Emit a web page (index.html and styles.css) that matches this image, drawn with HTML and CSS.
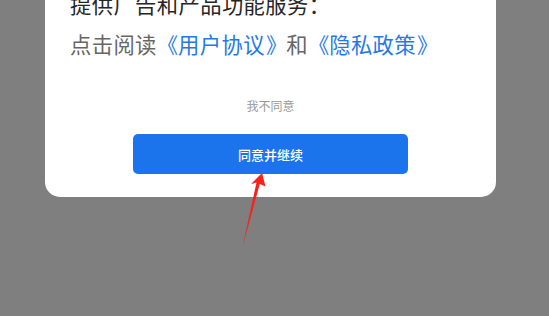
FILE: index.html
```html
<!DOCTYPE html>
<html lang="zh-CN">
<head>
<meta charset="utf-8">
<link rel="stylesheet" href="styles.css">
</head>
<body>
<div class="stage">
  <div class="card">
    <p class="intro">提供广告和产品功能服务：</p>
    <p class="links">点击阅读<span class="link"><span class="lq">《</span>用户协议<span class="rq">》</span></span>和<span class="link"><span class="lq">《</span>隐私政策<span class="rq">》</span></span></p>
    <div class="decline">我不同意</div>
    <button class="agree">同意并继续</button>
  </div>
  <svg class="arrow" width="549" height="316" viewBox="0 0 549 316">
    <path d="M262,173 L251,184 L256.5,182.5 L242.5,247 L259.8,184 L265.5,186.5 Z" fill="#f5231d"/>
  </svg>
</div>
</body>
</html>
```
FILE: styles.css
```css
html, body {
  margin: 0;
  padding: 0;
  background: #7f7f7f;
  width: 549px;
  height: 316px;
  overflow: hidden;
}
.stage {
  position: relative;
  display: flow-root;
  width: 549px;
  height: 316px;
}
.card {
  margin: -40px 0 0 45px;
  width: 451px;
  box-sizing: border-box;
  padding: 24px 25px 23px;
  background: #fff;
  border-radius: 0 0 15px 15px;
  display: flex;
  flex-direction: column;
  font-family: "Noto Sans CJK SC", "Noto Sans", sans-serif;
}
.intro, .links {
  margin: 0;
  font-size: 21.3px;
  line-height: 40px;
  letter-spacing: 0.4px;
  white-space: nowrap;
}
.intro { color: #262626; }
.links { color: #666; }
.link { color: #2479e6; }
.lq, .rq {
  display: inline-block;
  width: 1em;
  box-sizing: border-box;
}
.lq { text-align: right; padding-right: 1px; }
.rq { text-align: left; padding-left: 1px; }
.decline {
  margin-top: 32px;
  text-align: center;
  font-size: 12px;
  line-height: 20px;
  color: #999;
}
.agree {
  margin-top: 18px;
  align-self: center;
  width: 275px;
  height: 40px;
  border: none;
  border-radius: 5px;
  background: #1b74ec;
  color: #fff;
  font-family: "Noto Sans CJK SC", "Noto Sans", sans-serif;
  font-size: 13px;
  font-weight: 500;
  padding: 0;
}
.arrow {
  position: absolute;
  left: 0;
  top: 0;
  pointer-events: none;
}
```
